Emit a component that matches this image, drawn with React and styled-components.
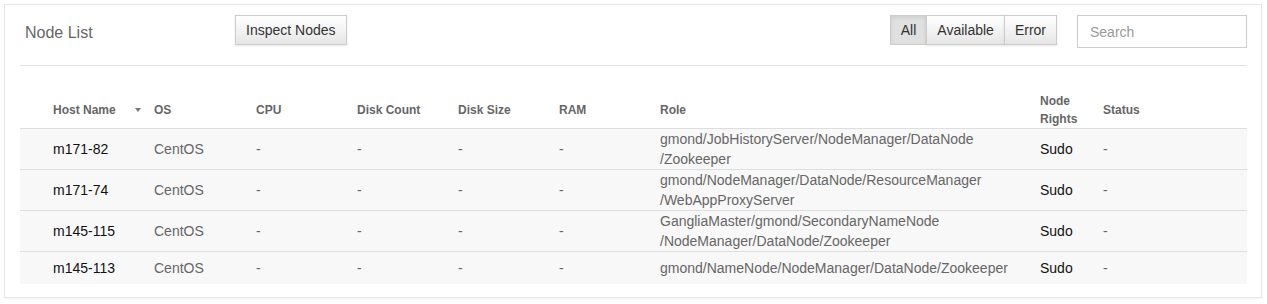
import React from 'react';
import styled, { createGlobalStyle } from 'styled-components';

const GlobalStyle = createGlobalStyle`
  body {
    margin: 0;
    background: #fff;
    font-family: 'Liberation Sans', Arial, sans-serif;
  }
`;

const Panel = styled.div`
  margin: 4px;
  width: 1258px;
  box-sizing: border-box;
  border: 1px solid #e6e6e6;
  box-shadow: 0 1px 2px rgba(0, 0, 0, 0.05);
  padding: 10px 14px 13px 15px;
  background: #fff;
`;

const Toolbar = styled.div`
  display: flex;
  align-items: flex-start;
  height: 51px;
  box-sizing: border-box;
  border-bottom: 1px solid #e2e2e2;
`;

const Title = styled.div`
  width: 210px;
  padding-left: 5px;
  font-size: 16px;
  line-height: 36px;
  color: #666;
`;

const Button = styled.button`
  height: 30px;
  padding: 0 10px;
  font-family: inherit;
  font-size: 14px;
  color: #333;
  border: 1px solid #ccc;
  border-radius: 0;
  background: ${(p) =>
    p.$active ? '#e0e0e0' : 'linear-gradient(to bottom, #ffffff 0%, #e6e6e6 100%)'};
  box-shadow: ${(p) =>
    p.$active
      ? 'inset 0 2px 4px rgba(0, 0, 0, 0.08)'
      : '0 1px 2px rgba(0, 0, 0, 0.1)'};
  cursor: pointer;
`;

const ButtonGroup = styled.div`
  display: flex;
  margin-left: auto;

  ${Button} + ${Button} {
    margin-left: -1px;
  }
`;

const Search = styled.input`
  margin-left: 20px;
  width: 170px;
  height: 33px;
  box-sizing: border-box;
  border: 1px solid #ccc;
  padding: 0 12px;
  font-family: inherit;
  font-size: 14px;
  color: #333;
  outline: none;

  &::placeholder {
    color: #999;
  }
`;

const Table = styled.table`
  margin-top: 26px;
  width: 1227px;
  border-collapse: collapse;
  table-layout: fixed;
`;

const Th = styled.th`
  box-sizing: border-box;
  width: ${(p) => p.$w}px;
  padding: 0 0 0 ${(p) => (p.$first ? 33 : 0)}px;
  text-align: left;
  vertical-align: middle;
  font-size: 12px;
  line-height: 18px;
  font-weight: bold;
  color: #666;
  border-bottom: 1px solid #dedede;
`;

const Caret = styled.span`
  display: inline-block;
  margin-left: 19px;
  vertical-align: 2px;
  border-left: 3.5px solid transparent;
  border-right: 3.5px solid transparent;
  border-top: 4px solid #777;
`;

const Row = styled.tr`
  background: #f8f8f8;
  & + & td {
    border-top: 1px solid #dedede;
  }
`;

const Td = styled.td`
  height: 32px;
  padding: 0 0 0 ${(p) => (p.$first ? 33 : 0)}px;
  vertical-align: middle;
  font-size: 14px;
  line-height: 20px;
  color: ${(p) => (p.$dark ? '#111' : '#666')};
`;

const columns = [
  { label: 'Host Name', w: 134, sort: true },
  { label: 'OS', w: 102 },
  { label: 'CPU', w: 101 },
  { label: 'Disk Count', w: 101 },
  { label: 'Disk Size', w: 101 },
  { label: 'RAM', w: 101 },
  { label: 'Role', w: 380 },
  { label: ['Node', 'Rights'], w: 63 },
  { label: 'Status', w: 144 },
];

const nodes = [
  {
    host: 'm171-82',
    role: ['gmond/JobHistoryServer/NodeManager/DataNode', '/Zookeeper'],
  },
  {
    host: 'm171-74',
    role: ['gmond/NodeManager/DataNode/ResourceManager', '/WebAppProxyServer'],
  },
  {
    host: 'm145-115',
    role: ['GangliaMaster/gmond/SecondaryNameNode', '/NodeManager/DataNode/Zookeeper'],
  },
  {
    host: 'm145-113',
    role: ['gmond/NameNode/NodeManager/DataNode/Zookeeper'],
  },
];

const App = () => {
  return (
    <>
      <GlobalStyle />
      <Panel>
        <Toolbar>
          <Title>Node List</Title>
          <Button>Inspect Nodes</Button>
          <ButtonGroup>
            <Button $active>All</Button>
            <Button>Available</Button>
            <Button>Error</Button>
          </ButtonGroup>
          <Search placeholder="Search" />
        </Toolbar>
        <Table>
          <thead>
            <tr>
              {columns.map((c, i) => (
                <Th key={i} $w={c.w} $first={i === 0}>
                  {Array.isArray(c.label) ? (
                    <>
                      {c.label[0]}
                      <br />
                      {c.label[1]}
                    </>
                  ) : (
                    c.label
                  )}
                  {c.sort && <Caret />}
                </Th>
              ))}
            </tr>
          </thead>
          <tbody>
            {nodes.map((n) => (
              <Row key={n.host}>
                <Td $first $dark>
                  {n.host}
                </Td>
                <Td>CentOS</Td>
                <Td>-</Td>
                <Td>-</Td>
                <Td>-</Td>
                <Td>-</Td>
                <Td>
                  {n.role.map((r, i) => (
                    <div key={i}>{r}</div>
                  ))}
                </Td>
                <Td $dark>Sudo</Td>
                <Td>-</Td>
              </Row>
            ))}
          </tbody>
        </Table>
      </Panel>
    </>
  );
};

export default App;
